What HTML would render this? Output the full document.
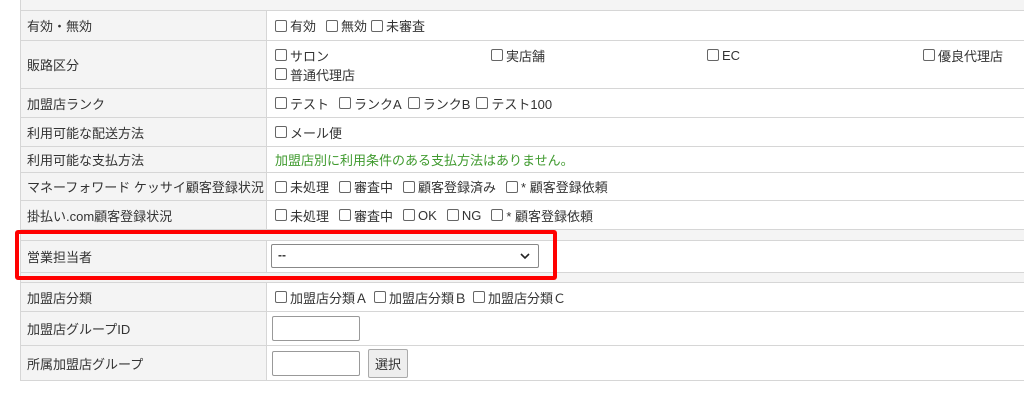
<!DOCTYPE html>
<html><head><meta charset="utf-8"><style>
body{margin:0;width:1024px;height:400px;background:#fff;font-family:"Liberation Sans","Noto Sans CJK JP",sans-serif;font-size:13px;color:#333;position:relative;overflow:hidden}
*{box-sizing:border-box}
.r{position:absolute;left:20px;right:0;border-bottom:1px solid #d6d6d6;border-left:1px solid #d6d6d6}
.l{position:absolute;left:0;top:0;bottom:0;width:246px;background:#f4f4f4;border-right:1px solid #d6d6d6;padding-left:6px;display:flex;align-items:center}
.v{position:absolute;left:254px;top:0;bottom:0;right:0;display:flex;align-items:center;flex-wrap:wrap}
.band{position:absolute;left:20px;right:0;background:#f4f4f4;border-bottom:1px solid #d6d6d6;border-left:1px solid #d6d6d6}
.c{display:inline-flex;align-items:center;margin-right:10px}
.c i{display:inline-block;width:12px;height:12px;border:1px solid #666;border-radius:2px;margin-right:3px;background:#fff}
input{width:88px;height:25px;border:1px solid #999;border-radius:2px}
</style></head><body>
<div class="band" style="top:0;height:11px"></div>
<div class="r" style="top:11px;height:30px"><div class="l">有効・無効</div><div class="v"><span class="c"><i></i>有効</span><span class="c" style="margin-right:4px"><i></i>無効</span><span class="c"><i></i>未審査</span></div></div>
<div class="r" style="top:41px;height:48px"><div class="l">販路区分</div><div class="v" style="align-content:center">
<span class="c" style="width:216px;margin:0"><i></i>サロン</span><span class="c" style="width:216px;margin:0"><i></i>実店舗</span><span class="c" style="width:216px;margin:0"><i></i>EC</span><span class="c" style="margin:0"><i></i>優良代理店</span><br><span class="c" style="width:100%"><i></i>普通代理店</span></div></div>
<div class="r" style="top:89px;height:29px"><div class="l">加盟店ランク</div><div class="v"><span class="c"><i></i>テスト</span><span class="c" style="margin-right:6px"><i></i>ランクA</span><span class="c" style="margin-right:6px"><i></i>ランクB</span><span class="c"><i></i>テスト100</span></div></div>
<div class="r" style="top:118px;height:29px"><div class="l">利用可能な配送方法</div><div class="v"><span class="c"><i></i>メール便</span></div></div>
<div class="r" style="top:147px;height:26px"><div class="l">利用可能な支払方法</div><div class="v" style="color:#3f9a2e">加盟店別に利用条件のある支払方法はありません。</div></div>
<div class="r" style="top:173px;height:28px"><div class="l">マネーフォワード ケッサイ顧客登録状況</div><div class="v"><span class="c"><i></i>未処理</span><span class="c"><i></i>審査中</span><span class="c"><i></i>顧客登録済み</span><span class="c"><i></i>* 顧客登録依頼</span></div></div>
<div class="r" style="top:201px;height:29px"><div class="l">掛払い.com顧客登録状況</div><div class="v"><span class="c"><i></i>未処理</span><span class="c"><i></i>審査中</span><span class="c"><i></i>OK</span><span class="c"><i></i>NG</span><span class="c"><i></i>* 顧客登録依頼</span></div></div>
<div class="band" style="top:230px;height:11px"></div>
<div class="r" style="top:241px;height:32px"><div class="l">営業担当者</div><div class="v"><div style="position:absolute;left:-4px;top:3px;width:268px;height:24px;border:1px solid #888;border-radius:2px;background:#fff;font-weight:bold;padding:3px 6px;font-size:12px">--<svg style="position:absolute;right:8px;top:8px" width="10" height="7" viewBox="0 0 10 7"><path d="M1 1l4 4 4-4" stroke="#222" stroke-width="1.6" fill="none"/></svg></div></div></div>
<div class="band" style="top:273px;height:10px"></div>
<div class="r" style="top:283px;height:29px"><div class="l">加盟店分類</div><div class="v"><span class="c" style="margin-right:6px"><i></i>加盟店分類Ａ</span><span class="c" style="margin-right:6px"><i></i>加盟店分類Ｂ</span><span class="c"><i></i>加盟店分類Ｃ</span></div></div>
<div class="r" style="top:312px;height:34px"><div class="l">加盟店グループID</div><div class="v"><input style="margin-left:-3px"></div></div>
<div class="r" style="top:346px;height:35px"><div class="l">所属加盟店グループ</div><div class="v"><input style="margin-left:-3px"><span style="margin-left:8px;display:inline-block;border:1px solid #aaa;background:#eee;border-radius:2px;padding:4px 6px">選択</span></div></div>
<div style="position:absolute;left:15px;top:230px;width:542px;height:50px;border:4px solid #f00;border-radius:3px"></div>
</body></html>
